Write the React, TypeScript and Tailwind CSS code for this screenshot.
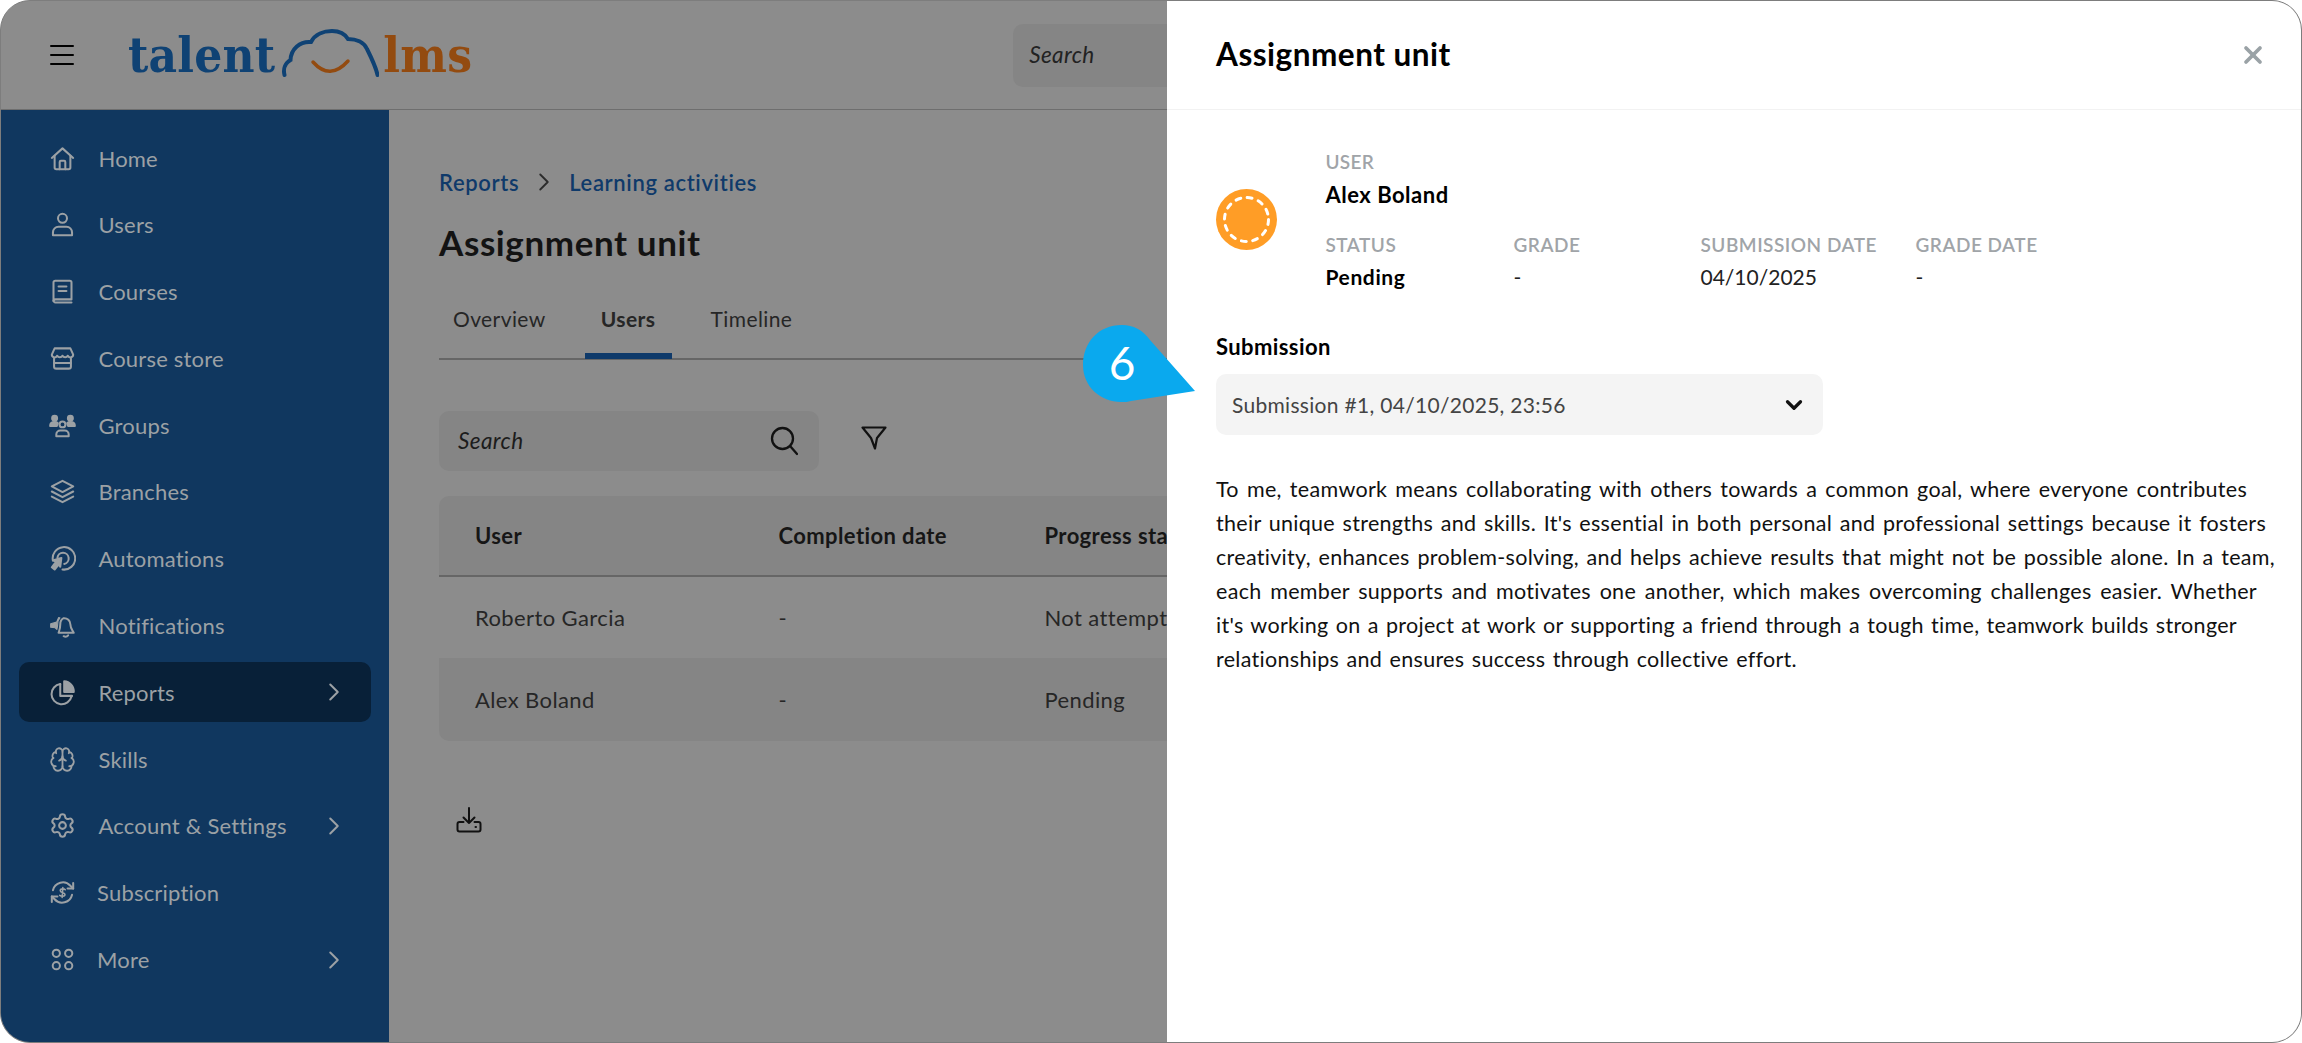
import { ChevronDown, ChevronRight, Brain, Settings, X } from "lucide-react"
import type { ReactNode } from "react"

function Ico({ children }: { children: ReactNode }) {
  return (
    <svg viewBox="0 0 24 24" fill="none" stroke="currentColor" strokeWidth="1.8" strokeLinecap="round" strokeLinejoin="round" className="w-[27px] h-[27px] shrink-0">
      {children}
    </svg>
  )
}

const navItems: { label: string; icon: ReactNode; chevron?: boolean; active?: boolean; tight?: boolean }[] = [
  {
    label: "Home",
    icon: (
      <Ico>
        <path d="M2.5 11.5 12 3l9.5 8.5" />
        <path d="M5 9.5V20a1.5 1.5 0 0 0 1.5 1.5h11A1.5 1.5 0 0 0 19 20V9.5" />
        <path d="M9.5 21.5V15a1 1 0 0 1 1-1h3a1 1 0 0 1 1 1v6.5" />
      </Ico>
    ),
  },
  {
    label: "Users",
    icon: (
      <Ico>
        <circle cx="12" cy="6.5" r="4" />
        <path d="M3.5 21.5V19a5 5 0 0 1 5-5h7a5 5 0 0 1 5 5v2.5z" />
      </Ico>
    ),
  },
  {
    label: "Courses",
    icon: (
      <Ico>
        <path d="M5.5 2.5h13a1.5 1.5 0 0 1 1.5 1.5v15H6a2 2 0 0 0-2 1.5V4a1.5 1.5 0 0 1 1.5-1.5z" />
        <path d="M4 20a1.7 1.7 0 0 0 1.7 1.7H20" />
        <path d="M8.5 7.5h7M8.5 11.5h7" />
      </Ico>
    ),
  },
  {
    label: "Course store",
    icon: (
      <Ico>
        <path d="M5 3h14l2.5 5.5a2.5 2.5 0 0 1-4.8 1 2.6 2.6 0 0 1-4.7 0 2.6 2.6 0 0 1-4.7 0 2.5 2.5 0 0 1-4.8-1z" />
        <path d="M4.5 12v7a2 2 0 0 0 2 2h11a2 2 0 0 0 2-2v-7" />
        <path d="M4.5 16h15" />
      </Ico>
    ),
  },
  {
    label: "Groups",
    icon: (
      <Ico>
        <circle cx="12" cy="11" r="2.6" />
        <path d="M6.5 21.5V20a3.5 3.5 0 0 1 3.5-3.5h4a3.5 3.5 0 0 1 3.5 3.5v1.500z" />
        <circle cx="5" cy="5.500" r="2.200" fill="currentColor" />
        <circle cx="19" cy="5.500" r="2.200" fill="currentColor" />
        <path d="M1 12.500c0-2.500 1.500-3.500 4-3.500 1.300 0 2.200.3 2.800 1l-.8 2.500zM23 12.500c0-2.500-1.500-3.500-4-3.500-1.300 0-2.200.3-2.800 1l.8 2.500z" fill="currentColor" />
      </Ico>
    ),
  },
  {
    label: "Branches",
    icon: (
      <Ico>
        <path d="M12 2.500 21.500 7.500 12 12.500 2.500 7.500z" />
        <path d="M2.500 12 12 17l9.500-5" />
        <path d="M2.500 16.500 12 21.500l9.500-5" />
      </Ico>
    ),
  },
  {
    label: "Automations",
    icon: (
      <Ico>
        <path d="M3.500 14A10 10 0 1 1 12 21.800" />
        <path d="M7.500 11.500A5 5 0 1 1 13.500 16.800" />
        <path d="M11 11.500 4 13.500l2 1.800-3.500 4.500 2.500 2 3.700-4.500 1.300 2z" fill="currentColor" />
      </Ico>
    ),
  },
  {
    label: "Notifications",
    icon: (
      <Ico>
        <path d="M13 5.500a5.500 5.500 0 0 1 6 5.500c0 4 2.500 6 3 7.500H8.500C9 17 10 15 10 11c0-2.500 1-4.500 3-5.500z" />
        <path d="M13 21.500c1.500.7 3 .5 4-.8" />
        <path d="M8.500 5 6.800 9 1.500 10.500v3l4 .5L7 15.500c.3-1.500.7-3 .7-4.500 0-2.300.5-4.300 2-5.800z" fill="currentColor" strokeWidth="1" />
      </Ico>
    ),
  },
  {
    label: "Reports",
    active: true,
    chevron: true,
    icon: (
      <Ico>
        <path d="M10 4.500A9 9 0 1 0 20 15.500" />
        <path d="M10 4.500V15h10.500" />
        <path d="M13.500 2a9 9 0 0 1 8.500 9.500h-8.500z" fill="currentColor" />
      </Ico>
    ),
  },
  { label: "Skills", icon: <Brain className="w-[27px] h-[27px] shrink-0" strokeWidth={1.6} /> },
  { label: "Account & Settings", chevron: true, icon: <Settings className="w-[27px] h-[27px] shrink-0" strokeWidth={1.8} /> },
  {
    label: "Subscription",
    tight: true,
    icon: (
      <Ico>
        <path d="M3.500 10A9 9 0 0 1 19 6l2.500 2.500" />
        <path d="M21.500 3.500v5h-5" />
        <path d="M20.500 14A9 9 0 0 1 5 18l-2.500-2.500" />
        <path d="M2.500 20.500v-5h5" />
        <path d="M14.500 9.500c-1-1-4.500-1.200-4.500 1 0 2.300 4.200 1 4.200 3.200 0 2-3.500 1.800-4.700.8M12.300 7.500l-.6 9" strokeWidth="1.400" />
      </Ico>
    ),
  },
  {
    label: "More",
    tight: true,
    chevron: true,
    icon: (
      <Ico>
        <circle cx="6.500" cy="6.500" r="3.200" />
        <circle cx="17.500" cy="6.500" r="3.200" />
        <circle cx="6.500" cy="17.500" r="3.200" />
        <circle cx="17.500" cy="17.500" r="3.200" />
      </Ico>
    ),
  },
]

function Sidebar() {
  return (
    <aside className="w-[388px] shrink-0 bg-[#10375f] pt-[18px] pl-[18px] pr-[18px] flex flex-col gap-[6.800px]">
      {navItems.map((item) => (
        <div
          key={item.label}
          className={`h-[60px] shrink-0 rounded-[10px] flex items-center pl-[30px] pr-[22px] text-[#9ca1a5] ${item.active ? "bg-[#082038]" : ""}`}
        >
          {item.icon}
          <span className={`text-[22px] tracking-[0.2px] ${item.tight ? "ml-[21px]" : "ml-[22.500px]"}`}>{item.label}</span>
          {item.chevron && <ChevronRight className="w-[30px] h-[30px] ml-auto" strokeWidth={1.6} />}
        </div>
      ))}
    </aside>
  )
}

function Logo() {
  return (
    <div className="flex items-center ml-[54px] h-[60px] font-['DejaVu_Serif_Condensed','DejaVu_Serif',serif] font-bold text-[49px] leading-none tracking-[0.2px]">
      <span className="text-[#0f4274]">talent</span>
      <svg viewBox="0 0 97 48" className="w-[97px] h-[48px] ml-[7px] -mt-[4px]" fill="none" strokeLinecap="round">
        <path d="M2.500 46C1 40 3 34 8.500 31 9 20 18 12 29 13 33 5 42 2 50 2 58 2 63 5 66 10 74 10 82 13 85 20 90 30 94 38 95.500 46" stroke="#0f4274" strokeWidth="4" />
        <path d="M31 33Q48 52 66 32" stroke="#934b10" strokeWidth="3.500" />
      </svg>
      <span className="text-[#934b10] ml-[4px]">lms</span>
    </div>
  )
}

function Header() {
  return (
    <header className="h-[109px] shrink-0 border-b border-[#6e6e6e] flex items-center">
      <div className="ml-[49px] w-[24px] flex flex-col gap-[6.500px]">
        <div className="h-[2.500px] bg-black rounded-full" />
        <div className="h-[2.500px] bg-black rounded-full" />
        <div className="h-[2.500px] bg-black rounded-full" />
      </div>
      <Logo />
      <div className="ml-[541px] w-[300px] h-[63px] rounded-[10px] bg-[#858585] flex items-center pl-[16px] italic text-[22.500px] tracking-[0.4px] text-[#222]">
        Search
      </div>
    </header>
  )
}

function Main() {
  return (
    <main className="flex-1 min-w-0 pl-[50px] flex flex-col text-[#262626]">
      <div className="mt-[57px] h-[30px] flex items-center font-semibold text-[22px] tracking-[0.650px] text-[#0f3a6a]">
        <span>Reports</span>
        <ChevronRight className="w-[30px] h-[30px] ml-[10px] mr-[10px] text-[#2c2c2c]" strokeWidth={1.5} />
        <span>Learning activities</span>
      </div>
      <h1 className="mt-[23px] h-[44px] flex items-center text-[35px] tracking-[0.600px] font-bold text-[#131313]">Assignment unit</h1>
      <div className="mt-[26px] h-[70px] border-b-2 border-[#666] flex gap-[25px] items-stretch">
        <div className="px-[14px] pt-[13px] text-[21px] tracking-[0.400px]">Overview</div>
        <div className="w-[87px] text-center pt-[13px] text-[21px] tracking-[0.400px] font-bold border-b-[6px] border-[#0f3a6a] -mb-[1px]">Users</div>
        <div className="px-[14px] pt-[13px] text-[21px] tracking-[0.400px]">Timeline</div>
      </div>
      <div className="mt-[51px] flex items-center">
        <div className="w-[380px] h-[60px] rounded-[10px] bg-[#858585] flex items-center justify-between pl-[19px] pr-[21px]">
          <span className="italic text-[22.500px] tracking-[0.400px] text-[#1c1c1c]">Search</span>
          <svg viewBox="0 0 28 30" className="w-[28px] h-[30px]" fill="none" stroke="#111" strokeWidth="2.300" strokeLinecap="round">
            <circle cx="12.500" cy="12.500" r="10.500" />
            <path d="m20.500 20.500 6.500 7.500" />
          </svg>
        </div>
        <svg viewBox="0 0 26 24" className="w-[26px] h-[24px] ml-[42px] -mt-[6px]" fill="none" stroke="#111" strokeWidth="2.200" strokeLinejoin="round">
          <path d="M1.500 1.500h23L16 12l-2 10.500L10 12z" />
        </svg>
      </div>
      <div className="mt-[25px] rounded-[10px] overflow-hidden text-[22px] tracking-[0.400px]">
        <div className="h-[81px] bg-[#858585] border-b-2 border-[#666] grid grid-cols-[303.500px_266px_1fr] pl-[36px] items-center font-bold text-[#161616]">
          <span>User</span>
          <span>Completion date</span>
          <span>Progress status</span>
        </div>
        <div className="h-[81px] grid grid-cols-[303.500px_266px_1fr] pl-[36px] items-center">
          <span>Roberto Garcia</span>
          <span>-</span>
          <span>Not attempted</span>
        </div>
        <div className="h-[83px] bg-[#858585] grid grid-cols-[303.500px_266px_1fr] pl-[36px] items-center">
          <span>Alex Boland</span>
          <span>-</span>
          <span>Pending</span>
        </div>
      </div>
      <svg viewBox="0 0 26 26" className="w-[26px] h-[26px] ml-[17px] mt-[66px]" fill="none" stroke="#111" strokeWidth="2" strokeLinecap="round" strokeLinejoin="round">
        <path d="M13 1v15M7.500 10.500 13 16l5.500-5.500" />
        <path d="M7.500 15H3.500A2 2 0 0 0 1.500 17v5.500a2 2 0 0 0 2 2h19a2 2 0 0 0 2-2V17a2 2 0 0 0-2-2h-4" />
        <path d="M19.500 20h.5" />
      </svg>
    </main>
  )
}

const metaColumns = [
  { label: "STATUS", value: "Pending", strong: true, w: "w-[188px]" },
  { label: "GRADE", value: "-", w: "w-[187px]" },
  { label: "SUBMISSION DATE", value: "04/10/2025", w: "w-[215px]" },
  { label: "GRADE DATE", value: "-", w: "w-[200px]" },
]

const answerLines = [
  { text: "To me, teamwork means collaborating with others towards a common goal, where everyone contributes", w: "w-[1031px]" },
  { text: "their unique strengths and skills. It's essential in both personal and professional settings because it fosters", w: "w-[1050px]" },
  { text: "creativity, enhances problem-solving, and helps achieve results that might not be possible alone. In a team,", w: "w-[1059px]" },
  { text: "each member supports and motivates one another, which makes overcoming challenges easier. Whether", w: "w-[1041px]" },
  { text: "it's working on a project at work or supporting a friend through a tough time, teamwork builds stronger", w: "w-[1021px]" },
  { text: "relationships and ensures success through collective effort.", w: "w-[581px]" },
]

function AssignmentPanel() {
  return (
    <section className="absolute top-0 bottom-0 right-0 w-[1134px] bg-white text-[#111]">
      <div className="h-[109px] border-b border-[#f2f2f2] flex items-center justify-between pl-[49px] pr-[34px] pb-[1px]">
        <h2 className="text-[31.500px] tracking-[0.500px] font-bold text-black">Assignment unit</h2>
        <X className="w-[28px] h-[28px] text-[#9aa2a6]" strokeWidth={3.200} />
      </div>
      <div className="pl-[49px] pt-[39px]">
        <div className="flex items-center">
          <svg viewBox="0 0 61 61" className="w-[61px] h-[61px] mr-[48.500px] shrink-0">
            <circle cx="30.500" cy="30.500" r="30.500" fill="#ff9d26" />
            <circle cx="30.500" cy="30.500" r="22" fill="none" stroke="#fff" strokeWidth="3" strokeLinecap="round" strokeDasharray="5 6.520" />
          </svg>
          <div>
            <div className="h-[26px] flex items-center text-[19px] tracking-[0.300px] font-semibold text-[#a0a4a8]">USER</div>
            <div className="mt-[6px] h-[26px] flex items-center text-[22px] tracking-[0.500px] font-bold text-black">Alex Boland</div>
            <div className="mt-[25px] flex">
              {metaColumns.map((col) => (
                <div key={col.label} className={col.w}>
                  <div className="h-[26px] flex items-center text-[19px] tracking-[0.500px] font-semibold text-[#a0a4a8] whitespace-nowrap">{col.label}</div>
                  <div className={`mt-[6px] h-[26px] flex items-center text-[21px] ${col.strong ? "font-bold text-black tracking-[0.600px]" : "text-[#222]"}`}>{col.value}</div>
                </div>
              ))}
            </div>
          </div>
        </div>
        <div className="mt-[43px] h-[26px] flex items-center text-[22px] tracking-[0.400px] font-bold text-black">Submission</div>
        <div className="mt-[15px] w-[607px] h-[61px] rounded-[10px] bg-[#f4f4f4] flex items-center justify-between pl-[16px] pr-[16px] text-[21px] tracking-[0.300px] text-[#444]">
          <span>Submission #1, 04/10/2025, 23:56</span>
          <ChevronDown className="w-[26px] h-[26px] text-[#111]" strokeWidth={3} />
        </div>
        <div className="mt-[37px] text-[21.500px] tracking-[0.300px] leading-[34px] text-[#111]">
          {answerLines.map((line) => (
            <div key={line.text} className={`${line.w} [text-align-last:justify]`}>{line.text}</div>
          ))}
        </div>
      </div>
    </section>
  )
}

function StepBadge() {
  return (
    <div className="absolute left-[1083px] top-[325px] w-[114px] h-[80px]">
      <svg viewBox="0 0 114 80" className="w-[114px] h-[80px]">
        <path d="M112 66 67 15C60 5 50 0 39 0 15 0 0 18 0 40c0 22 18 37 38 37 4 0 7 0 10-1z" fill="#0aa9ee" />
      </svg>
      <span className="absolute left-0 top-0 w-[78px] h-[76px] flex items-center justify-center text-white text-[46px] leading-none">6</span>
    </div>
  )
}

export default function App() {
  return (
    <div className="relative w-[2302px] h-[1043px] bg-white font-['Lato',sans-serif] overflow-hidden">
      <div className="relative w-full h-full rounded-[30px] border border-[#7d7d7d] bg-[#8c8c8c] overflow-hidden flex flex-col">
        <Header />
        <div className="flex-1 flex min-h-0">
          <Sidebar />
          <Main />
        </div>
        <AssignmentPanel />
      </div>
      <StepBadge />
    </div>
  )
}
